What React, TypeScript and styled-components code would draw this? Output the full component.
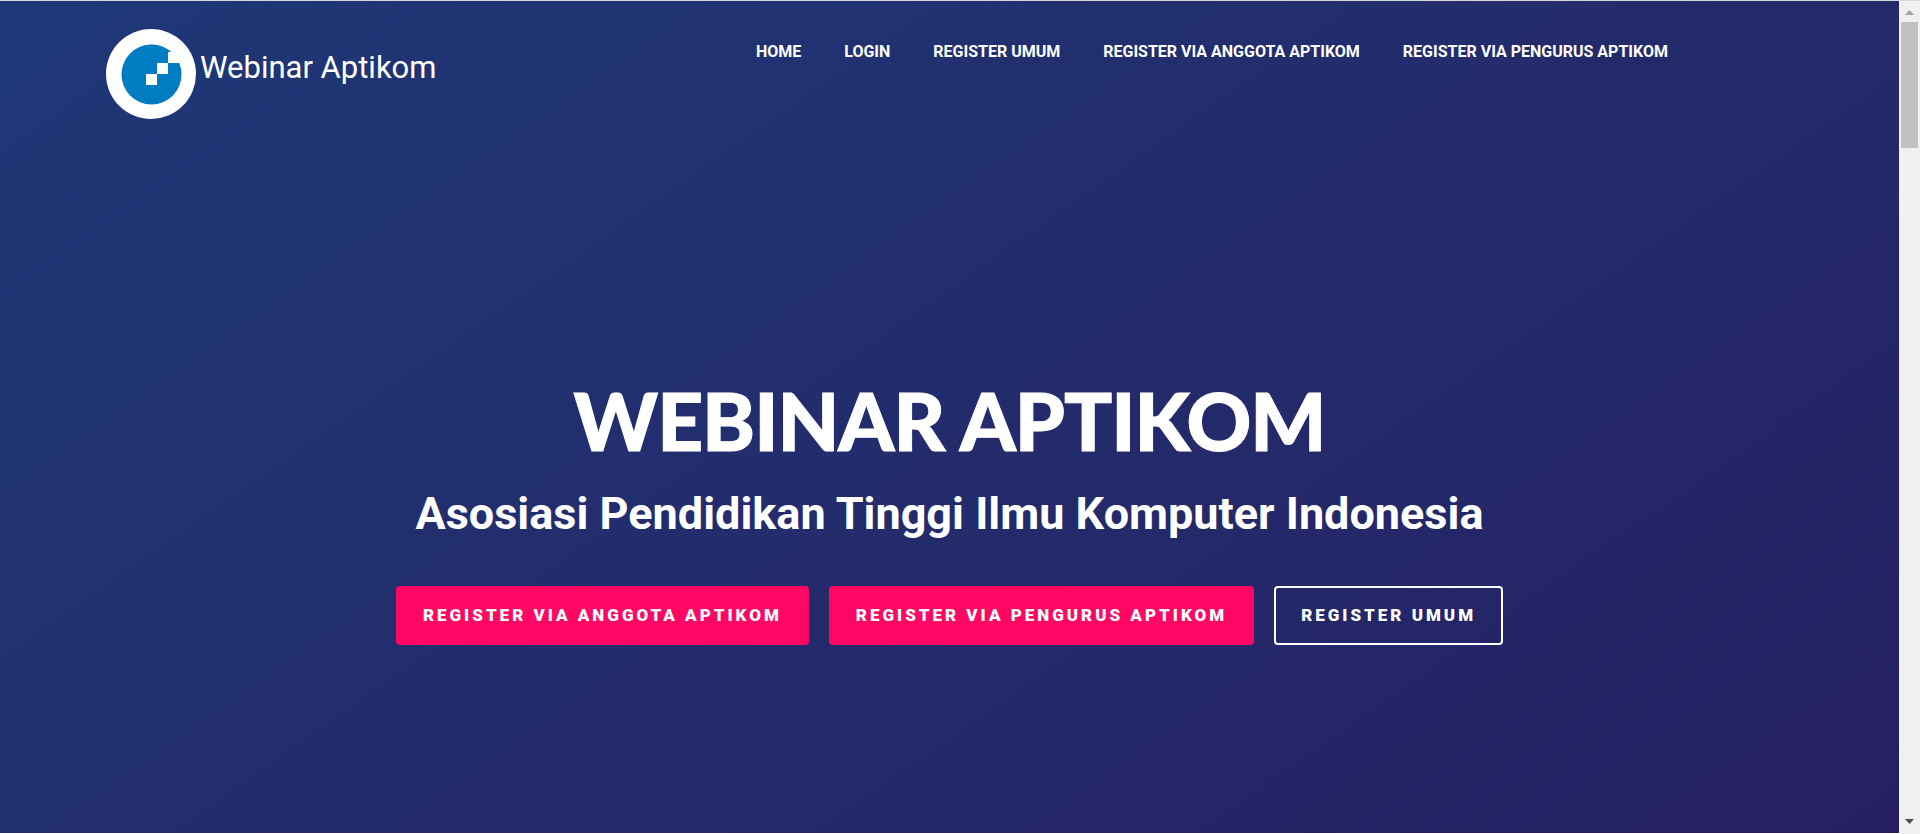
import React from "react";
import styled, { createGlobalStyle } from "styled-components";

const GlobalStyle = createGlobalStyle`
  *, *::before, *::after { box-sizing: border-box; }
  body {
    margin: 0;
    background: #fff;
    color: #fff;
    font-family: Roboto, "Liberation Sans", sans-serif;
  }
`;

const Page = styled.div`
  display: flex;
  min-height: 100vh;
  border-top: 1px solid #d5d9dc;
`;

const Hero = styled.div`
  flex: 1;
  display: flex;
  flex-direction: column;
  margin-bottom: 1px;
  background: linear-gradient(145deg, #1e3877 0%, #232c6c 50%, #262062 100%);
`;

const Header = styled.header`
  display: flex;
  justify-content: space-between;
  align-items: flex-start;
  padding: 28px 231px 0 106px;
`;

const Brand = styled.a`
  display: flex;
  gap: 4px;
  color: inherit;
  font-size: 31px;
  line-height: 78px;
  white-space: nowrap;
  text-decoration: none;
`;

const Logo = styled.svg`
  width: 90px;
  height: 90px;
`;

const Nav = styled.nav`
  display: flex;
  gap: 43px;
  padding-top: 11px;
`;

const NavLink = styled.a`
  color: inherit;
  font-size: 16px;
  font-weight: 700;
  line-height: 24px;
  text-transform: uppercase;
  text-decoration: none;
  white-space: nowrap;
`;

const Intro = styled.main`
  flex: 1;
  display: flex;
  flex-direction: column;
  align-items: center;
  justify-content: center;
  padding: 72px 0 8px;
  text-align: center;
`;

const Title = styled.h1`
  margin: 0;
  font-family: Lato, "Open Sans", sans-serif;
  font-size: 80px;
  font-weight: 900;
  letter-spacing: -1px;
  line-height: 96px;
  text-transform: uppercase;
  -webkit-text-stroke: 1px #fff;
`;

const Subtitle = styled.h2`
  margin: 18px 0 44px;
  font-size: 45px;
  font-weight: 700;
  line-height: 56px;
`;

const Actions = styled.div`
  display: flex;
  flex-wrap: wrap;
  justify-content: center;
  gap: 20px;
`;

const ActionButton = styled.button<{ $outlined?: boolean }>`
  height: 59px;
  padding: 0 25px;
  border: 2px solid ${(p) => (p.$outlined ? "#fff" : "#ff0763")};
  border-radius: 4px;
  background: ${(p) => (p.$outlined ? "transparent" : "#ff0763")};
  color: #fff;
  font-family: inherit;
  font-size: 17px;
  font-weight: 900;
  letter-spacing: 3px;
  text-transform: uppercase;
  cursor: pointer;
`;

const ScrollTrack = styled.div`
  width: 21px;
  display: flex;
  flex-direction: column;
  align-items: center;
  padding: 9px 2px 10px;
  background: #f0f0f0;
`;

const ScrollArrow = styled.svg`
  width: 9px;
  height: 5px;
`;

const ScrollThumb = styled.div`
  width: 17px;
  height: 126px;
  margin: 7px 0 auto;
  background: #c1c1c1;
`;

const links = [
  "Home",
  "Login",
  "Register Umum",
  "Register via Anggota Aptikom",
  "Register via Pengurus Aptikom",
];

export default function App() {
  return (
    <>
      <GlobalStyle />
      <Page>
        <Hero>
          <Header>
            <Brand href="#">
              <Logo viewBox="0 0 90 90" aria-hidden="true">
                <circle cx="45" cy="45" r="45" fill="#fff" />
                <circle cx="45.500" cy="45.500" r="30" fill="#007cc3" />
                <path
                  d="M40 45h11v11h-11zM51 34h11v11h-11zM62 23h14v11h-14z"
                  fill="#fff"
                />
              </Logo>
              Webinar Aptikom
            </Brand>
            <Nav>
              {links.map((label) => (
                <NavLink key={label} href="#">
                  {label}
                </NavLink>
              ))}
            </Nav>
          </Header>
          <Intro>
            <Title>Webinar Aptikom</Title>
            <Subtitle>Asosiasi Pendidikan Tinggi Ilmu Komputer Indonesia</Subtitle>
            <Actions>
              <ActionButton type="button">Register via Anggota Aptikom</ActionButton>
              <ActionButton type="button">Register via Pengurus Aptikom</ActionButton>
              <ActionButton type="button" $outlined>
                Register Umum
              </ActionButton>
            </Actions>
          </Intro>
        </Hero>
        <ScrollTrack>
          <ScrollArrow viewBox="0 0 9 5" aria-hidden="true">
            <path d="M0 5L4.500 0L9 5z" fill="#a3a3a3" />
          </ScrollArrow>
          <ScrollThumb />
          <ScrollArrow viewBox="0 0 9 5" aria-hidden="true">
            <path d="M0 0H9L4.500 5z" fill="#505050" />
          </ScrollArrow>
        </ScrollTrack>
      </Page>
    </>
  );
}
